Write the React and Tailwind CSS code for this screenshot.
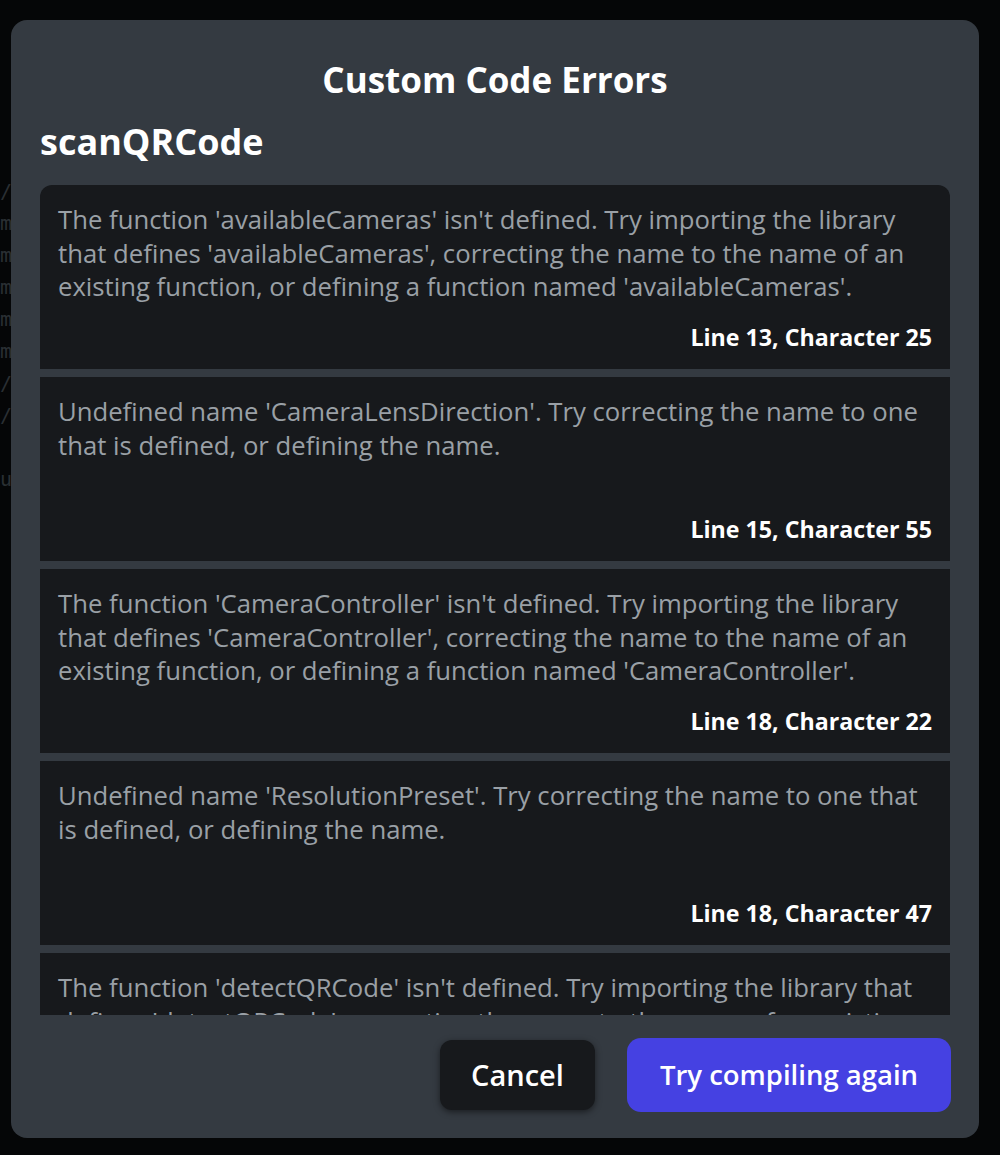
import React from "react";

const errors = [
  {
    lines: [
      "The function 'availableCameras' isn't defined. Try importing the library",
      "that defines 'availableCameras', correcting the name to the name of an",
      "existing function, or defining a function named 'availableCameras'.",
    ],
    loc: "Line 13, Character 25",
  },
  {
    lines: [
      "Undefined name 'CameraLensDirection'. Try correcting the name to one",
      "that is defined, or defining the name.",
    ],
    loc: "Line 15, Character 55",
  },
  {
    lines: [
      "The function 'CameraController' isn't defined. Try importing the library",
      "that defines 'CameraController', correcting the name to the name of an",
      "existing function, or defining a function named 'CameraController'.",
    ],
    loc: "Line 18, Character 22",
  },
  {
    lines: [
      "Undefined name 'ResolutionPreset'. Try correcting the name to one that",
      "is defined, or defining the name.",
    ],
    loc: "Line 18, Character 47",
  },
  {
    lines: [
      "The function 'detectQRCode' isn't defined. Try importing the library that",
      "defines 'detectQRCode', correcting the name to the name of an existing",
      "function, or defining a function named 'detectQRCode'.",
    ],
    loc: "Line 21, Character 9",
  },
];

function ErrorItem({ item }) {
  return (
    <div className="h-[184px] shrink-0 bg-[#17191c] px-[18px] pt-[18px] pb-[16px] flex flex-col justify-between">
      <div className="text-[25.7px] leading-[33.5px] text-[#9aa0a6]">
        {item.lines.map((l, i) => (
          <div key={i} className="whitespace-nowrap">{l}</div>
        ))}
      </div>
      <div className="text-right text-[23.2px] font-bold text-white leading-[32px]">{item.loc}</div>
    </div>
  );
}

export default function App() {
  return (
    <div className="relative h-[1155px] w-full overflow-hidden bg-[#050607] font-['Open_Sans',sans-serif]">
      {/* editor behind the dialog */}
      <div className="pt-[175px] pl-0 text-[20px] leading-[32px] text-[#2a2f33] font-['DejaVu_Sans_Mono',monospace]">
        <div>/</div>
        <div>m</div>
        <div>m</div>
        <div>m</div>
        <div>m</div>
        <div>m</div>
        <div>/</div>
        <div>/</div>
        <div className="h-[32px]" />
        <div>u</div>
      </div>

      <div className="absolute left-[11px] top-[20px] flex h-[1118px] w-[968px] flex-col rounded-[16px] bg-[#343a41]">
        <h1 className="mt-[38px] text-center text-[35px] font-bold leading-[44px] text-white">Custom Code Errors</h1>
        <h2 className="mt-[20px] px-[29px] text-[36px] font-bold leading-[40px] text-white">scanQRCode</h2>
        <div className="mx-[29px] mt-[23px] flex h-[830px] shrink-0 flex-col gap-[8px] overflow-hidden rounded-t-[12px]">
          {errors.map((e, i) => (
            <ErrorItem key={i} item={e} />
          ))}
        </div>
        <div className="mt-[23px] flex items-center justify-end gap-[32px] px-[28px]">
          <button className="h-[70px] w-[155px] rounded-[12px] bg-[#17191c] text-[29px] font-semibold leading-[40px] text-white shadow-[0_2px_6px_rgba(0,0,0,0.5)]">
            Cancel
          </button>
          <button className="h-[74px] w-[324px] rounded-[14px] bg-[#4541e2] text-[27.5px] font-semibold leading-[40px] text-white">
            Try compiling again
          </button>
        </div>
      </div>
    </div>
  );
}
